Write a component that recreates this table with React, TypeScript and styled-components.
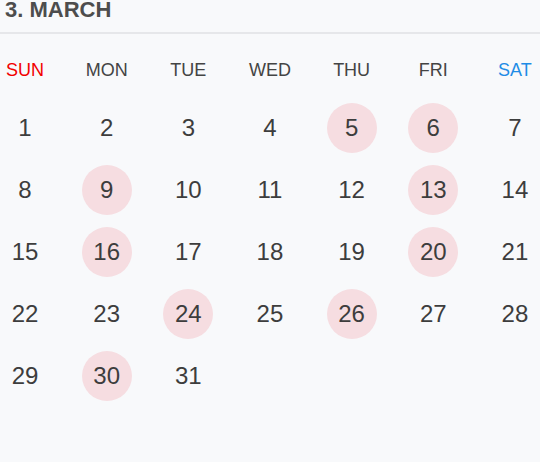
import React from "react";
import styled, { createGlobalStyle } from "styled-components";

const Global = createGlobalStyle`
  html, body { margin: 0; padding: 0; background: #f8f9fb; }
  body { font-family: "Liberation Sans", Arial, sans-serif; }
`;

const Wrap = styled.div`
  width: 540px;
  height: 462px;
  background: #f8f9fb;
  overflow: hidden;
`;

const Title = styled.h1`
  margin: 0;
  padding: 0 0 12px 5px;
  font-size: 22px;
  line-height: 20px;
  font-weight: 700;
  color: #4d4d4d;
  border-bottom: 2px solid #e6e7ea;
`;

const Row = styled.div<{ $mt: number; $h: number }>`
  display: flex;
  justify-content: space-between;
  margin-top: ${(p) => p.$mt}px;
  height: ${(p) => p.$h}px;
`;

const DayName = styled.div<{ $color: string }>`
  width: 50px;
  display: flex;
  align-items: center;
  justify-content: center;
  font-size: 18px;
  color: ${(p) => p.$color};
`;

const Grid = styled.div`
  display: grid;
  grid-template-columns: repeat(7, 50px);
  justify-content: space-between;
  row-gap: 12px;
  margin-top: 8px;
`;

const Day = styled.div<{ $marked: boolean }>`
  width: 50px;
  height: 50px;
  border-radius: 50%;
  display: flex;
  align-items: center;
  justify-content: center;
  font-size: 24px;
  color: #3d3d3d;
  background: ${(p) => (p.$marked ? "#f6dde1" : "transparent")};
`;

const names = [
  { n: "SUN", c: "#f20000" },
  { n: "MON", c: "#444" },
  { n: "TUE", c: "#444" },
  { n: "WED", c: "#444" },
  { n: "THU", c: "#444" },
  { n: "FRI", c: "#444" },
  { n: "SAT", c: "#1e8ce6" },
];

const marked = new Set([5, 6, 9, 13, 16, 20, 24, 26, 30]);

export default function App() {
  const days = Array.from({ length: 31 }, (_, i) => i + 1);
  return (
    <Wrap>
      <Global />
      <Title>3. MARCH</Title>
      <Row $mt={11} $h={50}>
        {names.map((d) => (
          <DayName key={d.n} $color={d.c}>
            {d.n}
          </DayName>
        ))}
      </Row>
      <Grid>
        {days.map((d) => (
          <Day key={d} $marked={marked.has(d)}>
            {d}
          </Day>
        ))}
      </Grid>
    </Wrap>
  );
}
